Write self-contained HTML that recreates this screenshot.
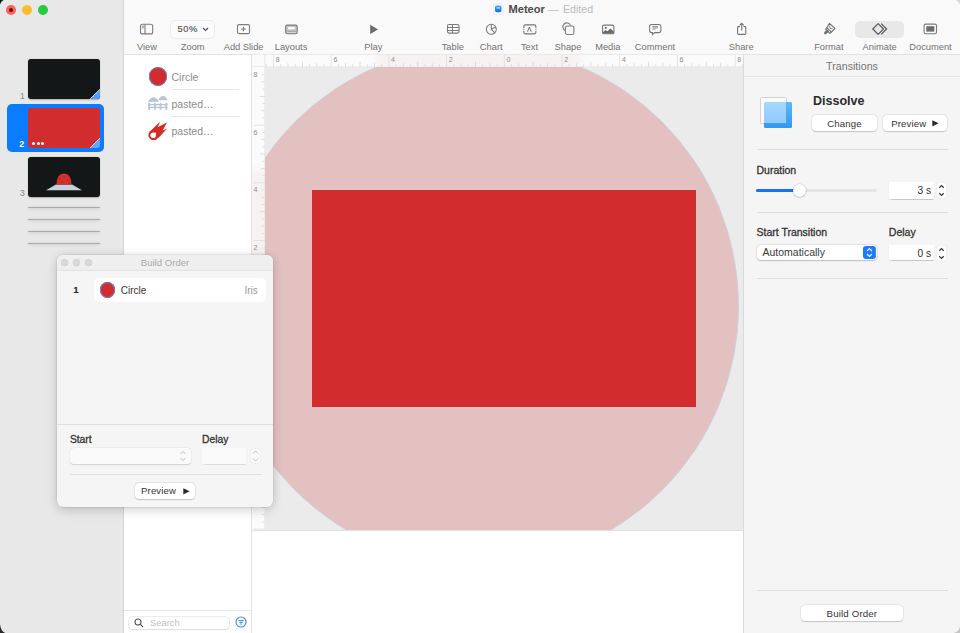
<!DOCTYPE html>
<html><head><meta charset="utf-8">
<style>
*{margin:0;padding:0;box-sizing:border-box}
html,body{width:960px;height:633px;overflow:hidden;background:#1a1a1a;font-family:"Liberation Sans",sans-serif}
.a{position:absolute}
#win{position:absolute;left:0;top:0;width:960px;height:633px;overflow:hidden;background:#f6f6f6}
#side{left:0;top:0;width:124px;height:633px;background:#e8e8e8;border-right:1px solid #d6d6d6}
#tb{left:124px;top:0;width:836px;height:55px;background:#f9f9f9;border-bottom:1px solid #e2e2e2}
.lbl{position:absolute;top:42px;font-size:9.3px;color:#727272;white-space:nowrap;transform:translateX(-50%)}
.ico{position:absolute}
#objs{left:124px;top:55px;width:128px;height:578px;background:#fff;border-right:1px solid #e3e3e3}
#rulerT{left:252px;top:55px;width:491px;height:12px;background:#f8f6f6;border-bottom:1px solid #e6e2e2}
#rulerL{left:252px;top:67px;width:13px;height:463px;background:#f8f6f6;border-right:1px solid #e6e2e2}
#below{left:252px;top:530px;width:491px;height:103px;background:#fff;border-top:1px solid #e2e2e2}
#insp{left:743px;top:55px;width:217px;height:578px;background:#f5f5f5;border-left:1px solid #dadada}
.txt{position:absolute;white-space:nowrap}
.btn{position:absolute;background:#fff;border-radius:4px;box-shadow:0 0 0 0.5px rgba(0,0,0,.09),0 0.5px 1.2px rgba(0,0,0,.17);font-size:9.6px;letter-spacing:0.15px;color:#333;text-align:center}
.semi{-webkit-text-stroke:0.3px currentColor}
.sep{position:absolute;height:1px;background:#dedede}
</style></head><body>
<div id="win">
  <div id="side" class="a">
    <div class="a" style="left:6px;top:4.6px;width:10px;height:10px;border-radius:50%;background:#ff5f57"></div>
    <div class="a" style="left:22px;top:4.6px;width:10px;height:10px;border-radius:50%;background:#febc2e"></div>
    <div class="a" style="left:38px;top:4.6px;width:10px;height:10px;border-radius:50%;background:#28c840"></div>
    <div class="a" style="left:9.2px;top:7.6px;width:4px;height:4px;border-radius:50%;background:#5a1410"></div>
    <!-- slide 1 -->
    <div class="a" style="left:28px;top:58.5px;width:72px;height:40.5px;border-radius:3px;background:#141718;box-shadow:0 0.5px 1.5px rgba(0,0,0,.25);overflow:hidden">
      <div class="a" style="right:0;bottom:0;width:10px;height:10px;background:linear-gradient(135deg,transparent 47%,rgba(255,255,255,.7) 47%,rgba(255,255,255,.7) 55%,#4c9dff 55%)"></div>
    </div>
    <div class="txt" style="left:20px;top:90.7px;font-size:8.6px;color:#858585">1</div>
    <!-- selection -->
    <div class="a" style="left:7px;top:103.5px;width:97px;height:48px;border-radius:5px;background:#0b7cff"></div>
    <div class="a" style="left:28px;top:107.5px;width:72px;height:40.5px;border-radius:3px;background:#d12d2e;overflow:hidden">
      <div class="a" style="right:0;bottom:0;width:10px;height:10px;background:linear-gradient(135deg,transparent 47%,rgba(255,255,255,.7) 47%,rgba(255,255,255,.7) 55%,#5ea9ff 55%)"></div>
      <div class="a" style="left:4px;top:34px;width:3px;height:3px;border-radius:50%;background:#fff"></div>
      <div class="a" style="left:8.5px;top:34px;width:3px;height:3px;border-radius:50%;background:#fff"></div>
      <div class="a" style="left:13px;top:34px;width:3px;height:3px;border-radius:50%;background:#fff"></div>
    </div>
    <div class="txt" style="left:19.3px;top:139.3px;font-size:8.8px;font-weight:bold;color:#fff">2</div>
    <!-- slide 3 -->
    <div class="a" style="left:28px;top:156.5px;width:72px;height:40.5px;border-radius:3px;background:#141718;box-shadow:0 0.5px 1.5px rgba(0,0,0,.25);overflow:hidden">
      <svg class="a" style="left:0;top:0" width="72" height="41" viewBox="0 0 72 41">
        <path d="M18 33.2 L28 27.5 L44 27.5 L54 33.2 Z" fill="#c6d3df"/>
        <path d="M28.5 27.8 Q28.5 16.5 36 16.5 Q43.5 16.5 43.5 27.8 Z" fill="#d72f2e"/>
        <circle cx="32" cy="22" r="0.6" fill="#333"/><circle cx="36" cy="20" r="0.6" fill="#333"/><circle cx="39.5" cy="23" r="0.6" fill="#333"/><circle cx="34" cy="25" r="0.6" fill="#333"/><circle cx="41" cy="26" r="0.6" fill="#333"/>
      </svg>
    </div>
    <div class="txt" style="left:20px;top:187.5px;font-size:8.6px;color:#858585">3</div>
    <div class="a" style="left:28px;top:206.5px;width:72px;height:1.2px;background:#aaaaaa;box-shadow:0 1.2px 2.5px rgba(0,0,0,.16),0 -1px 2px rgba(0,0,0,.06)"></div>
    <div class="a" style="left:28px;top:218.5px;width:72px;height:1.2px;background:#aaaaaa;box-shadow:0 1.2px 2.5px rgba(0,0,0,.16),0 -1px 2px rgba(0,0,0,.06)"></div>
    <div class="a" style="left:28px;top:230.5px;width:72px;height:1.2px;background:#aaaaaa;box-shadow:0 1.2px 2.5px rgba(0,0,0,.16),0 -1px 2px rgba(0,0,0,.06)"></div>
    <div class="a" style="left:28px;top:242.5px;width:72px;height:1.2px;background:#aaaaaa;box-shadow:0 1.2px 2.5px rgba(0,0,0,.16),0 -1px 2px rgba(0,0,0,.06)"></div>
  </div>

  <div id="tb" class="a">
  </div>
  <!-- toolbar content in page coords -->
  <div class="a" style="left:0;top:0;width:960px;height:55px">
    <!-- title -->
    <svg class="a" style="left:493px;top:3px" width="11" height="12" viewBox="0 0 11 12">
      <defs><linearGradient id="dg" x1="0" y1="0" x2="0" y2="1"><stop offset="0" stop-color="#45a8ff"/><stop offset="1" stop-color="#0b6ef6"/></linearGradient></defs>
      <path d="M0.7 0.8 H8 L10 2.8 V11.2 H0.7 Z" fill="#fdfdfd" stroke="#e4e4e4" stroke-width="0.7"/>
      <rect x="2" y="2.5" width="6.5" height="6.7" rx="1.8" fill="url(#dg)"/>
      <ellipse cx="5.25" cy="4.8" rx="2" ry="0.9" fill="#cfe6ff" opacity="0.8"/>
    </svg>
    <div class="txt" style="left:508.5px;top:3px;font-size:11.1px;font-weight:bold;color:#4b4b4b">Meteor</div>
    <div class="txt" style="left:548px;top:3px;font-size:10.6px;color:#b9b9b9">—</div>
    <div class="txt" style="left:563px;top:3px;font-size:10.6px;color:#b9b9b9">Edited</div>

    <!-- icons -->
    <svg class="a" style="left:139px;top:23px" width="16" height="13" viewBox="0 0 16 13" fill="none" stroke="#7b7b7b" stroke-width="1.1">
      <rect x="1.5" y="1.3" width="12.2" height="9.6" rx="2"/>
      <line x1="6" y1="1.3" x2="6" y2="10.9"/>
      <line x1="2.8" y1="3.2" x2="5" y2="3.2" stroke-width="0.8"/>
      <line x1="2.8" y1="4.8" x2="5" y2="4.8" stroke-width="0.8"/>
    </svg>
    <div class="a" style="left:171px;top:21px;width:43px;height:17px;border-radius:4px;background:#fbfbfb;box-shadow:0 0 0 0.7px #e6e6e6"></div>
    <div class="txt semi" style="left:177.6px;top:24.3px;font-size:9.3px;letter-spacing:0.5px;color:#5a5a5a;-webkit-text-stroke:0.2px #5a5a5a">50%</div>
    <svg class="a" style="left:202px;top:27px" width="7" height="5" viewBox="0 0 7 5" fill="none" stroke="#555" stroke-width="1.2"><path d="M1 1 L3.5 3.5 L6 1"/></svg>
    <svg class="a" style="left:236px;top:23px" width="15" height="13" viewBox="0 0 15 13" fill="none" stroke="#7b7b7b" stroke-width="1.1">
      <rect x="1.5" y="1.6" width="12" height="9" rx="1.5"/>
      <line x1="7.5" y1="3.8" x2="7.5" y2="8.4"/><line x1="5.2" y1="6.1" x2="9.8" y2="6.1"/>
    </svg>
    <svg class="a" style="left:284px;top:23px" width="15" height="13" viewBox="0 0 15 13">
      <rect x="1.6" y="2.1" width="11.6" height="8.7" rx="1.6" fill="#c4c4c4" stroke="#7a7a7a" stroke-width="1.1"/>
      <rect x="4" y="4" width="6.8" height="2.3" rx="0.6" fill="#fafafa"/>
      <rect x="3" y="7.6" width="8.8" height="0.9" fill="#6f6f6f"/>
      <rect x="3" y="6.8" width="8.8" height="0.5" fill="#eaeaea"/>
      <rect x="3" y="8.8" width="8.8" height="0.6" fill="#eaeaea"/>
    </svg>
    <svg class="a" style="left:369px;top:24px" width="10" height="11" viewBox="0 0 10 11"><path d="M1.2 0.8 L9 5.4 L1.2 10 Z" fill="#6b6b6b"/></svg>
    <svg class="a" style="left:445.5px;top:23.3px" width="14" height="11" viewBox="0 0 14 11" fill="none" stroke="#7b7b7b" stroke-width="1">
      <rect x="1.5" y="1.5" width="11.5" height="8.6" rx="1.5" stroke-width="1.1"/>
      <line x1="1.5" y1="4.5" x2="13" y2="4.5"/><line x1="1.5" y1="7.5" x2="13" y2="7.5"/><line x1="6.5" y1="1.5" x2="6.5" y2="10"/>
    </svg>
    <svg class="a" style="left:485px;top:23px" width="13" height="13" viewBox="0 0 13 13" fill="none" stroke="#7b7b7b" stroke-width="1.1">
      <circle cx="6.3" cy="6.3" r="5"/><path d="M6.3 1.3 V6.3 L9.8 9.8 M6.3 6.3 L10.8 4"/>
    </svg>
    <svg class="a" style="left:522px;top:23px" width="16" height="12" viewBox="0 0 16 12" fill="none" stroke="#767676" stroke-width="1.1">
      <path d="M1.8 4.9 V3.5 Q1.8 1.9 3.4 1.9 H12.3 Q13.9 1.9 13.9 3.5 V4.9 M1.8 7.7 V9.3 Q1.8 10.9 3.4 10.9 H12.3 Q13.9 10.9 13.9 9.3 V7.7 M1.8 5.8 V6.8 M13.9 5.8 V6.8"/>
      <path d="M5.5 8.8 L7.35 4 L9.2 8.8" stroke-width="1"/>
    </svg>
    <svg class="a" style="left:561px;top:21px" width="14" height="15" viewBox="0 0 14 15" fill="none" stroke="#7b7b7b" stroke-width="1.1">
      <path d="M4.3 9.6 A4 4 0 1 1 9.6 4.6"/>
      <rect x="4.4" y="5" width="8.5" height="8.5" rx="1.8"/>
    </svg>
    <svg class="a" style="left:601px;top:24px" width="14" height="11" viewBox="0 0 14 11">
      <rect x="1.6" y="1.1" width="11.3" height="8.7" rx="1.4" fill="none" stroke="#767676" stroke-width="1.1"/>
      <path d="M1.8 8.6 L4.4 6.1 L6.4 7.3 L9.5 4.6 L12.7 7.6 V9.6 H1.8 Z" fill="#6a6a6a"/>
      <circle cx="4.8" cy="3.9" r="1.05" fill="#6a6a6a"/>
    </svg>
    <svg class="a" style="left:648px;top:23px" width="14" height="13" viewBox="0 0 14 13" fill="none" stroke="#767676" stroke-width="1.05">
      <path d="M3.6 1.4 H10.9 Q12.9 1.4 12.9 3.4 V7.6 Q12.9 9.6 10.9 9.6 H6.7 L4.5 11.6 V9.6 H3.6 Q1.6 9.6 1.6 7.6 V3.4 Q1.6 1.4 3.6 1.4 Z"/>
      <path d="M4.4 3.4 H9.9 M4.4 4.8 H9.9 M4.4 6.2 H7.6" stroke-width="0.75"/>
    </svg>
    <svg class="a" style="left:735px;top:22px" width="13" height="14" viewBox="0 0 13 14" fill="none" stroke="#767676" stroke-width="1.1">
      <path d="M4.9 4.6 H3.2 Q2.6 4.6 2.6 5.4 V11.5 Q2.6 12.4 3.5 12.4 H9.9 Q10.8 12.4 10.8 11.5 V5.4 Q10.8 4.6 10.2 4.6 H8.5"/>
      <path d="M6.7 8.4 V1.4 M4.6 3.4 L6.7 1.2 L8.8 3.4"/>
    </svg>
    <svg class="a" style="left:822px;top:21px" width="15" height="16" viewBox="0 0 15 16" fill="none" stroke="#6f6f6f" stroke-width="1.1" stroke-linejoin="round">
      <path d="M7.5 2.3 L13 7.4 L9.4 11.1 L4.9 6.7 Z"/>
      <path d="M7.6 4.6 L8.1 7.3 L10.6 7.9" stroke-width="0.9"/>
      <path d="M4.9 6.7 L3.6 8.1 L7.9 12.4 L9.4 11.1"/>
      <path d="M5.3 10 L3.4 12" stroke-width="2.6" stroke-linecap="round"/>
    </svg>
    <div class="a" style="left:855px;top:21px;width:49px;height:17px;border-radius:5px;background:#e8e8e8"></div>
    <svg class="a" style="left:870px;top:21px" width="20" height="16" viewBox="0 0 20 16" fill="none" stroke="#575757" stroke-width="1.15" stroke-linejoin="round">
      <path d="M8.15 2.6 L13.5 8 L8.15 13.4 L2.8 8 Z"/>
      <path d="M11.2 2.6 L16.6 8 L11.2 13.4"/>
    </svg>
    <svg class="a" style="left:923px;top:23px" width="15" height="12" viewBox="0 0 15 12">
      <rect x="1.1" y="1.1" width="12.4" height="9.6" rx="1.5" fill="none" stroke="#7b7b7b" stroke-width="1.1"/>
      <rect x="3.3" y="3.2" width="8" height="5.4" fill="#6b6b6b"/>
    </svg>

    <div class="lbl" style="left:146.9px">View</div>
    <div class="lbl" style="left:192.7px">Zoom</div>
    <div class="lbl" style="left:243.6px">Add Slide</div>
    <div class="lbl" style="left:291px">Layouts</div>
    <div class="lbl" style="left:373.3px">Play</div>
    <div class="lbl" style="left:452.8px">Table</div>
    <div class="lbl" style="left:491.2px">Chart</div>
    <div class="lbl" style="left:529.5px">Text</div>
    <div class="lbl" style="left:568px">Shape</div>
    <div class="lbl" style="left:607.8px">Media</div>
    <div class="lbl" style="left:655px">Comment</div>
    <div class="lbl" style="left:741.2px">Share</div>
    <div class="lbl" style="left:828.9px">Format</div>
    <div class="lbl" style="left:879.6px">Animate</div>
    <div class="lbl" style="left:930.5px">Document</div>
  </div>
  <div id="objs" class="a">
    <div class="a" style="left:24.5px;top:12px;width:18.5px;height:18.5px;border-radius:50%;background:#d12d2e;box-shadow:0 0 0 1px #6d7fcc inset"></div>
    <div class="txt" style="left:47.5px;top:15.5px;font-size:10.5px;color:#8b8b8b">Circle</div>
    <div class="a" style="left:47.5px;top:34px;width:67px;height:1px;background:#e6e6e6"></div>
    <svg class="a" style="left:24px;top:41px" width="20" height="14" viewBox="0 0 20 14" fill="#b9c5d1">
      <path d="M0 5.8 Q2.5 1.3 5.6 1.3 Q8.6 1.3 11 5.8 Z"/><path d="M10 4.3 Q12.5 0 15 0 Q17.6 0 19.6 4.3 Z"/>
      <rect x="0" y="8" width="19.6" height="1.3"/><rect x="0" y="10.8" width="19.6" height="1.3"/>
      <rect x="0.3" y="6.8" width="1.8" height="7"/><rect x="6" y="6.8" width="1.8" height="7"/><rect x="11.6" y="6.8" width="1.8" height="7"/><rect x="17.4" y="6.8" width="1.8" height="7"/>
    </svg>
    <div class="txt" style="left:47.5px;top:42.5px;font-size:10.5px;color:#8b8b8b">pasted…</div>
    <div class="a" style="left:47.5px;top:61px;width:67px;height:1px;background:#e6e6e6"></div>
    <svg class="a" style="left:24px;top:66px" width="20" height="19" viewBox="0 0 20 19">
      <path d="M1.2 11.2 L12.2 0.6 L9.6 6.2 L19 1.4 L14.6 9.4 L19.2 7.4 L10.6 16.8 Z" fill="#d62b25"/>
      <circle cx="5.6" cy="14" r="5.2" fill="#d62b25"/>
      <circle cx="5.2" cy="14.3" r="2.8" fill="#fff"/><circle cx="7.2" cy="12.4" r="0.9" fill="#fff"/>
    </svg>
    <div class="txt" style="left:47.5px;top:70px;font-size:10.5px;color:#8b8b8b">pasted…</div>
    <div class="a" style="left:0;top:555px;width:127px;height:1px;background:#e6e6e6"></div>
    <div class="a" style="left:5px;top:561.5px;width:100px;height:12.5px;border-radius:3px;background:#fff;box-shadow:0 0 0 0.6px #dedede,0 0.6px 1px rgba(0,0,0,.12)"></div>
    <svg class="a" style="left:10px;top:563px" width="10" height="10" viewBox="0 0 10 10" fill="none" stroke="#555" stroke-width="1.1"><circle cx="4" cy="4" r="3"/><path d="M6.2 6.2 L9 9"/></svg>
    <div class="txt" style="left:26px;top:562.3px;font-size:9.4px;color:#c0c0c0">Search</div>
    <svg class="a" style="left:110.8px;top:560.8px" width="12" height="12" viewBox="0 0 12 12" fill="none" stroke="#3d8cf0" stroke-width="1.15"><circle cx="6" cy="6" r="5"/><path d="M3.5 4.5 H8.5 M4.3 6.3 H7.7 M5.2 8 H6.8"/></svg>
  </div>
  <div class="a" style="left:252px;top:54px;width:491px;height:476px;overflow:hidden;background:#fbfbfb">
    <div class="a" style="left:13px;top:13px;width:478px;height:463px;background:#ebebeb"></div>
    <svg class="a" style="left:13px;top:13px" width="478" height="463" viewBox="13 13 478 463"><circle cx="226.55" cy="252.07" r="260.08" fill="#e4c1c1" stroke="#ccd2e2" stroke-width="0.8"/></svg>
    <div class="a" style="left:0;top:0;width:491px;height:13px;overflow:hidden"><div class="a" style="left:124px;top:-4px;width:205px;height:22px;background:#e4c1c1;filter:blur(3px)"></div></div>
    <div class="a" style="left:0;top:13px;width:13px;height:463px;overflow:hidden"><div class="a" style="left:-4px;top:103px;width:22px;height:298px;background:#e4c1c1;filter:blur(3px)"></div></div>
    <div class="a" style="left:60px;top:136px;width:384px;height:217px;background:#d12d2e"></div>
  </div>
  <svg class="a" style="left:252px;top:54px" width="491" height="13" viewBox="0 0 491 13">
<rect x="0" y="0" width="491" height="13" fill="rgba(250,250,250,0.86)"/>
<rect x="0" y="0" width="491" height="1" fill="#e9e9e9"/>
<rect x="0" y="12.5" width="491" height="0.5" fill="#e2e2e2"/>
<rect x="12.5" y="0" width="0.8" height="13" fill="#e4e4e4"/>
<rect x="13.89" y="10.2" width="0.8" height="2.6" fill="#dadada"/>
<rect x="21.10" y="1" width="0.8" height="12" fill="#dedede"/>
<rect x="28.31" y="10.2" width="0.8" height="2.6" fill="#dadada"/>
<rect x="35.53" y="9.2" width="0.8" height="3.6" fill="#d8d8d8"/>
<rect x="42.74" y="10.2" width="0.8" height="2.6" fill="#dadada"/>
<rect x="49.95" y="7.8" width="0.8" height="5" fill="#d5d5d5"/>
<rect x="57.16" y="10.2" width="0.8" height="2.6" fill="#dadada"/>
<rect x="64.37" y="9.2" width="0.8" height="3.6" fill="#d8d8d8"/>
<rect x="71.59" y="10.2" width="0.8" height="2.6" fill="#dadada"/>
<rect x="78.80" y="1" width="0.8" height="12" fill="#dedede"/>
<rect x="86.01" y="10.2" width="0.8" height="2.6" fill="#dadada"/>
<rect x="93.22" y="9.2" width="0.8" height="3.6" fill="#d8d8d8"/>
<rect x="100.44" y="10.2" width="0.8" height="2.6" fill="#dadada"/>
<rect x="107.65" y="7.8" width="0.8" height="5" fill="#d5d5d5"/>
<rect x="114.86" y="10.2" width="0.8" height="2.6" fill="#dadada"/>
<rect x="122.08" y="9.2" width="0.8" height="3.6" fill="#d8d8d8"/>
<rect x="129.29" y="10.2" width="0.8" height="2.6" fill="#dadada"/>
<rect x="136.50" y="1" width="0.8" height="12" fill="#dedede"/>
<rect x="143.71" y="10.2" width="0.8" height="2.6" fill="#dadada"/>
<rect x="150.93" y="9.2" width="0.8" height="3.6" fill="#d8d8d8"/>
<rect x="158.14" y="10.2" width="0.8" height="2.6" fill="#dadada"/>
<rect x="165.35" y="7.8" width="0.8" height="5" fill="#d5d5d5"/>
<rect x="172.56" y="10.2" width="0.8" height="2.6" fill="#dadada"/>
<rect x="179.78" y="9.2" width="0.8" height="3.6" fill="#d8d8d8"/>
<rect x="186.99" y="10.2" width="0.8" height="2.6" fill="#dadada"/>
<rect x="194.20" y="1" width="0.8" height="12" fill="#dedede"/>
<rect x="201.41" y="10.2" width="0.8" height="2.6" fill="#dadada"/>
<rect x="208.62" y="9.2" width="0.8" height="3.6" fill="#d8d8d8"/>
<rect x="215.84" y="10.2" width="0.8" height="2.6" fill="#dadada"/>
<rect x="223.05" y="7.8" width="0.8" height="5" fill="#d5d5d5"/>
<rect x="230.26" y="10.2" width="0.8" height="2.6" fill="#dadada"/>
<rect x="237.47" y="9.2" width="0.8" height="3.6" fill="#d8d8d8"/>
<rect x="244.69" y="10.2" width="0.8" height="2.6" fill="#dadada"/>
<rect x="251.90" y="1" width="0.8" height="12" fill="#dedede"/>
<rect x="259.11" y="10.2" width="0.8" height="2.6" fill="#dadada"/>
<rect x="266.33" y="9.2" width="0.8" height="3.6" fill="#d8d8d8"/>
<rect x="273.54" y="10.2" width="0.8" height="2.6" fill="#dadada"/>
<rect x="280.75" y="7.8" width="0.8" height="5" fill="#d5d5d5"/>
<rect x="287.96" y="10.2" width="0.8" height="2.6" fill="#dadada"/>
<rect x="295.18" y="9.2" width="0.8" height="3.6" fill="#d8d8d8"/>
<rect x="302.39" y="10.2" width="0.8" height="2.6" fill="#dadada"/>
<rect x="309.60" y="1" width="0.8" height="12" fill="#dedede"/>
<rect x="316.81" y="10.2" width="0.8" height="2.6" fill="#dadada"/>
<rect x="324.02" y="9.2" width="0.8" height="3.6" fill="#d8d8d8"/>
<rect x="331.24" y="10.2" width="0.8" height="2.6" fill="#dadada"/>
<rect x="338.45" y="7.8" width="0.8" height="5" fill="#d5d5d5"/>
<rect x="345.66" y="10.2" width="0.8" height="2.6" fill="#dadada"/>
<rect x="352.88" y="9.2" width="0.8" height="3.6" fill="#d8d8d8"/>
<rect x="360.09" y="10.2" width="0.8" height="2.6" fill="#dadada"/>
<rect x="367.30" y="1" width="0.8" height="12" fill="#dedede"/>
<rect x="374.51" y="10.2" width="0.8" height="2.6" fill="#dadada"/>
<rect x="381.73" y="9.2" width="0.8" height="3.6" fill="#d8d8d8"/>
<rect x="388.94" y="10.2" width="0.8" height="2.6" fill="#dadada"/>
<rect x="396.15" y="7.8" width="0.8" height="5" fill="#d5d5d5"/>
<rect x="403.36" y="10.2" width="0.8" height="2.6" fill="#dadada"/>
<rect x="410.58" y="9.2" width="0.8" height="3.6" fill="#d8d8d8"/>
<rect x="417.79" y="10.2" width="0.8" height="2.6" fill="#dadada"/>
<rect x="425.00" y="1" width="0.8" height="12" fill="#dedede"/>
<rect x="432.21" y="10.2" width="0.8" height="2.6" fill="#dadada"/>
<rect x="439.43" y="9.2" width="0.8" height="3.6" fill="#d8d8d8"/>
<rect x="446.64" y="10.2" width="0.8" height="2.6" fill="#dadada"/>
<rect x="453.85" y="7.8" width="0.8" height="5" fill="#d5d5d5"/>
<rect x="461.06" y="10.2" width="0.8" height="2.6" fill="#dadada"/>
<rect x="468.27" y="9.2" width="0.8" height="3.6" fill="#d8d8d8"/>
<rect x="475.49" y="10.2" width="0.8" height="2.6" fill="#dadada"/>
<rect x="482.70" y="1" width="0.8" height="12" fill="#dedede"/>
<rect x="489.91" y="10.2" width="0.8" height="2.6" fill="#dadada"/>
</svg>
<div class="txt" style="left:275.7px;top:55.6px;font-size:7px;color:#8c8c8c">8</div>
<div class="txt" style="left:333.4px;top:55.6px;font-size:7px;color:#8c8c8c">6</div>
<div class="txt" style="left:391.1px;top:55.6px;font-size:7px;color:#8c8c8c">4</div>
<div class="txt" style="left:448.8px;top:55.6px;font-size:7px;color:#8c8c8c">2</div>
<div class="txt" style="left:506.5px;top:55.6px;font-size:7px;color:#8c8c8c">0</div>
<div class="txt" style="left:564.2px;top:55.6px;font-size:7px;color:#8c8c8c">2</div>
<div class="txt" style="left:621.9px;top:55.6px;font-size:7px;color:#8c8c8c">4</div>
<div class="txt" style="left:679.6px;top:55.6px;font-size:7px;color:#8c8c8c">6</div>
<div class="txt" style="left:737.3px;top:55.6px;font-size:7px;color:#8c8c8c">8</div>
  <svg class="a" style="left:252px;top:67px" width="13" height="463" viewBox="0 0 13 463">
<rect x="0" y="0" width="13" height="463" fill="rgba(250,250,250,0.86)"/>

<rect x="12.5" y="0" width="0.5" height="463" fill="#e2e2e2"/>
<rect x="10.2" y="7.31" width="2.6" height="0.8" fill="#dadada"/>
<rect x="9.2" y="14.52" width="3.6" height="0.8" fill="#d8d8d8"/>
<rect x="10.2" y="21.74" width="2.6" height="0.8" fill="#dadada"/>
<rect x="7.8" y="28.95" width="5" height="0.8" fill="#d5d5d5"/>
<rect x="10.2" y="36.16" width="2.6" height="0.8" fill="#dadada"/>
<rect x="9.2" y="43.38" width="3.6" height="0.8" fill="#d8d8d8"/>
<rect x="10.2" y="50.59" width="2.6" height="0.8" fill="#dadada"/>
<rect x="1" y="57.80" width="12" height="0.8" fill="#dedede"/>
<rect x="10.2" y="65.01" width="2.6" height="0.8" fill="#dadada"/>
<rect x="9.2" y="72.22" width="3.6" height="0.8" fill="#d8d8d8"/>
<rect x="10.2" y="79.44" width="2.6" height="0.8" fill="#dadada"/>
<rect x="7.8" y="86.65" width="5" height="0.8" fill="#d5d5d5"/>
<rect x="10.2" y="93.86" width="2.6" height="0.8" fill="#dadada"/>
<rect x="9.2" y="101.08" width="3.6" height="0.8" fill="#d8d8d8"/>
<rect x="10.2" y="108.29" width="2.6" height="0.8" fill="#dadada"/>
<rect x="1" y="115.50" width="12" height="0.8" fill="#dedede"/>
<rect x="10.2" y="122.71" width="2.6" height="0.8" fill="#dadada"/>
<rect x="9.2" y="129.93" width="3.6" height="0.8" fill="#d8d8d8"/>
<rect x="10.2" y="137.14" width="2.6" height="0.8" fill="#dadada"/>
<rect x="7.8" y="144.35" width="5" height="0.8" fill="#d5d5d5"/>
<rect x="10.2" y="151.56" width="2.6" height="0.8" fill="#dadada"/>
<rect x="9.2" y="158.78" width="3.6" height="0.8" fill="#d8d8d8"/>
<rect x="10.2" y="165.99" width="2.6" height="0.8" fill="#dadada"/>
<rect x="1" y="173.20" width="12" height="0.8" fill="#dedede"/>
<rect x="10.2" y="180.41" width="2.6" height="0.8" fill="#dadada"/>
<rect x="9.2" y="187.62" width="3.6" height="0.8" fill="#d8d8d8"/>
<rect x="10.2" y="194.84" width="2.6" height="0.8" fill="#dadada"/>
<rect x="7.8" y="202.05" width="5" height="0.8" fill="#d5d5d5"/>
<rect x="10.2" y="209.26" width="2.6" height="0.8" fill="#dadada"/>
<rect x="9.2" y="216.47" width="3.6" height="0.8" fill="#d8d8d8"/>
<rect x="10.2" y="223.69" width="2.6" height="0.8" fill="#dadada"/>
<rect x="1" y="230.90" width="12" height="0.8" fill="#dedede"/>
<rect x="10.2" y="238.11" width="2.6" height="0.8" fill="#dadada"/>
<rect x="9.2" y="245.33" width="3.6" height="0.8" fill="#d8d8d8"/>
<rect x="10.2" y="252.54" width="2.6" height="0.8" fill="#dadada"/>
<rect x="7.8" y="259.75" width="5" height="0.8" fill="#d5d5d5"/>
<rect x="10.2" y="266.96" width="2.6" height="0.8" fill="#dadada"/>
<rect x="9.2" y="274.18" width="3.6" height="0.8" fill="#d8d8d8"/>
<rect x="10.2" y="281.39" width="2.6" height="0.8" fill="#dadada"/>
<rect x="1" y="288.60" width="12" height="0.8" fill="#dedede"/>
<rect x="10.2" y="295.81" width="2.6" height="0.8" fill="#dadada"/>
<rect x="9.2" y="303.03" width="3.6" height="0.8" fill="#d8d8d8"/>
<rect x="10.2" y="310.24" width="2.6" height="0.8" fill="#dadada"/>
<rect x="7.8" y="317.45" width="5" height="0.8" fill="#d5d5d5"/>
<rect x="10.2" y="324.66" width="2.6" height="0.8" fill="#dadada"/>
<rect x="9.2" y="331.88" width="3.6" height="0.8" fill="#d8d8d8"/>
<rect x="10.2" y="339.09" width="2.6" height="0.8" fill="#dadada"/>
<rect x="1" y="346.30" width="12" height="0.8" fill="#dedede"/>
<rect x="10.2" y="353.51" width="2.6" height="0.8" fill="#dadada"/>
<rect x="9.2" y="360.73" width="3.6" height="0.8" fill="#d8d8d8"/>
<rect x="10.2" y="367.94" width="2.6" height="0.8" fill="#dadada"/>
<rect x="7.8" y="375.15" width="5" height="0.8" fill="#d5d5d5"/>
<rect x="10.2" y="382.36" width="2.6" height="0.8" fill="#dadada"/>
<rect x="9.2" y="389.58" width="3.6" height="0.8" fill="#d8d8d8"/>
<rect x="10.2" y="396.79" width="2.6" height="0.8" fill="#dadada"/>
<rect x="1" y="404.00" width="12" height="0.8" fill="#dedede"/>
<rect x="10.2" y="411.21" width="2.6" height="0.8" fill="#dadada"/>
<rect x="9.2" y="418.43" width="3.6" height="0.8" fill="#d8d8d8"/>
<rect x="10.2" y="425.64" width="2.6" height="0.8" fill="#dadada"/>
<rect x="7.8" y="432.85" width="5" height="0.8" fill="#d5d5d5"/>
<rect x="10.2" y="440.06" width="2.6" height="0.8" fill="#dadada"/>
<rect x="9.2" y="447.27" width="3.6" height="0.8" fill="#d8d8d8"/>
<rect x="10.2" y="454.49" width="2.6" height="0.8" fill="#dadada"/>
<rect x="1" y="461.70" width="12" height="0.8" fill="#dedede"/>
</svg>
<div class="txt" style="left:253.6px;top:71.0px;font-size:7px;color:#8c8c8c">8</div>
<div class="txt" style="left:253.6px;top:128.7px;font-size:7px;color:#8c8c8c">6</div>
<div class="txt" style="left:253.6px;top:186.4px;font-size:7px;color:#8c8c8c">4</div>
<div class="txt" style="left:253.6px;top:244.1px;font-size:7px;color:#8c8c8c">2</div>
<div class="txt" style="left:253.6px;top:301.8px;font-size:7px;color:#8c8c8c">0</div>
<div class="txt" style="left:253.6px;top:359.5px;font-size:7px;color:#8c8c8c">2</div>
<div class="txt" style="left:253.6px;top:417.2px;font-size:7px;color:#8c8c8c">4</div>
<div class="txt" style="left:253.6px;top:474.9px;font-size:7px;color:#8c8c8c">6</div>
  <div id="below" class="a"></div>
  <div id="insp" class="a"></div>
  <div class="a" style="left:744px;top:55px;width:216px;height:578px">
    <div class="txt" style="left:0;width:216px;text-align:center;top:5.3px;font-size:10.7px;color:#747474">Transitions</div>
    <div class="a" style="left:0;top:21px;width:216px;height:1px;background:#e2e2e2"></div>
    <!-- dissolve icon -->
    <div class="a" style="left:15.8px;top:41.8px;width:27px;height:27px;border:1px solid #d3d3d3;background:#fafafa;border-radius:1.5px"></div>
    <div class="a" style="left:20.4px;top:46.9px;width:27.6px;height:26.6px;border-radius:1.5px;background:linear-gradient(180deg,#5cb7ff,#2d99f7);box-shadow:0 0 0.5px rgba(0,0,0,.25)"></div>
    <div class="a" style="left:20.4px;top:46.9px;width:21.9px;height:20.9px;background:rgba(255,255,255,.45);border-right:0.6px dashed rgba(200,200,200,.5);border-bottom:0.6px dashed rgba(200,200,200,.5)"></div>
    <div class="txt" style="left:69px;top:38.8px;font-size:12.5px;font-weight:bold;color:#2b2b2b">Dissolve</div>
    <div class="btn" style="left:68.3px;top:60.2px;width:64.3px;height:15.6px;line-height:17px">Change</div>
    <div class="btn" style="left:138.9px;top:60.2px;width:64.6px;height:15.6px;line-height:17px;text-align:left;padding-left:8.3px">Preview<svg style="position:absolute;left:49.5px;top:4.6px" width="7" height="7" viewBox="0 0 7 7"><path d="M0.3 0.2 L6.6 3.3 L0.3 6.4 Z" fill="#2a2a2a"/></svg></div>
    <div class="sep" style="left:12.5px;top:94px;width:191px"></div>
    <div class="txt semi" style="left:12.5px;top:108.7px;font-size:10.5px;color:#333">Duration</div>
    <div class="a" style="left:12.2px;top:133.8px;width:121px;height:3.2px;border-radius:1.6px;background:#e5e5e5"></div>
    <div class="a" style="left:12.2px;top:133.8px;width:43px;height:3.2px;border-radius:1.6px;background:#1275f4"></div>
    <div class="a" style="left:48.7px;top:128.9px;width:13.2px;height:13.2px;border-radius:50%;background:#fff;box-shadow:0 0 0 0.5px rgba(0,0,0,.1),0 0.5px 1.5px rgba(0,0,0,.25)"></div>
    <div class="a" style="left:144.8px;top:127px;width:44.8px;height:16.6px;background:#fff;box-shadow:0 0.5px 1px rgba(0,0,0,.18)"></div>
    <div class="txt" style="left:144.8px;width:42.3px;text-align:right;top:130.2px;font-size:10.2px;color:#2e2e2e">3 s</div>
    <svg class="a" style="left:192.4px;top:127px" width="11" height="17" viewBox="0 0 11 17">
      <rect x="0.3" y="0.3" width="10.4" height="16.4" rx="3.5" fill="#fff" stroke="#e4e4e4" stroke-width="0.6"/>
      <path d="M3.2 5.8 L5.5 3.6 L7.8 5.8 M3.2 11.2 L5.5 13.4 L7.8 11.2" fill="none" stroke="#3a3a3a" stroke-width="1.2"/>
    </svg>
    <div class="sep" style="left:12.5px;top:156.5px;width:191px"></div>
    <div class="txt semi" style="left:12.5px;top:171.2px;font-size:10.5px;color:#333">Start Transition</div>
    <div class="txt semi" style="left:144.8px;top:171.2px;font-size:10.5px;color:#333">Delay</div>
    <div class="a" style="left:12.5px;top:189.8px;width:120.8px;height:15.7px;border-radius:4px;background:#fff;box-shadow:0 0 0 0.5px rgba(0,0,0,.08),0 0.5px 1.5px rgba(0,0,0,.2)"></div>
    <div class="txt" style="left:18.5px;top:191.2px;font-size:10.5px;color:#3a3a3a">Automatically</div>
    <svg class="a" style="left:118.7px;top:191.2px" width="13" height="13" viewBox="0 0 13 13">
      <rect x="0" y="0" width="12.9" height="12.9" rx="3" fill="#1a7df5"/>
      <path d="M4 5 L6.45 2.6 L8.9 5 M4 8 L6.45 10.4 L8.9 8" fill="none" stroke="#fff" stroke-width="1.1"/>
    </svg>
    <div class="a" style="left:144.8px;top:189.8px;width:44.8px;height:15.7px;background:#fff;box-shadow:0 0.5px 1px rgba(0,0,0,.18)"></div>
    <div class="txt" style="left:144.8px;width:42.3px;text-align:right;top:192.7px;font-size:10.2px;color:#2e2e2e">0 s</div>
    <svg class="a" style="left:192.4px;top:189.5px" width="11" height="17" viewBox="0 0 11 17">
      <rect x="0.3" y="0.3" width="10.4" height="16.4" rx="3.5" fill="#fff" stroke="#e4e4e4" stroke-width="0.6"/>
      <path d="M3.2 5.8 L5.5 3.6 L7.8 5.8 M3.2 11.2 L5.5 13.4 L7.8 11.2" fill="none" stroke="#3a3a3a" stroke-width="1.2"/>
    </svg>
    <div class="sep" style="left:12.5px;top:222.5px;width:191px"></div>
    <div class="sep" style="left:12.5px;top:535px;width:191px"></div>
    <div class="btn" style="left:56.8px;top:550px;width:102.2px;height:15.6px;line-height:17px;font-size:9.7px">Build Order</div>
  </div>

  <!-- Build Order panel -->
  <div class="a" style="left:57px;top:254.9px;width:216px;height:252.2px;border-radius:6px;background:#f5f5f5;box-shadow:0 0 0 0.5px rgba(0,0,0,.1),0 0 8px rgba(0,0,0,.08),0 4px 12px rgba(0,0,0,.13);overflow:hidden">
    <div class="a" style="left:0;top:0;width:216px;height:16px;background:#efefef;border-bottom:1px solid #e3e3e3"></div>
    <svg class="a" style="left:0;top:0" width="40" height="16" viewBox="0 0 40 16"><g fill="#d9d9d9" stroke="#cdcdcd" stroke-width="0.6"><circle cx="7.5" cy="7.7" r="3.4"/><circle cx="19.4" cy="7.7" r="3.4"/><circle cx="31.5" cy="7.7" r="3.4"/></g></svg>
    <div class="txt" style="left:0;width:216px;text-align:center;top:2.2px;font-size:9.6px;color:#aaaaaa">Build Order</div>
    <div class="txt" style="left:16.2px;top:29.3px;font-size:9.8px;font-weight:bold;color:#222">1</div>
    <div class="a" style="left:37px;top:23px;width:171.8px;height:24px;border-radius:5px;background:#fff"></div>
    <div class="a" style="left:42.7px;top:27.5px;width:15.3px;height:15.3px;border-radius:50%;background:#d12d2e;box-shadow:0 0 0 1px #6d7fcc inset"></div>
    <div class="txt" style="left:63.8px;top:30.3px;font-size:10px;color:#333">Circle</div>
    <div class="txt" style="left:187.5px;top:30.3px;font-size:10px;color:#9a9a9a">Iris</div>
    <div class="a" style="left:0;top:169.3px;width:216px;height:1px;background:#e0e0e0"></div>
    <div class="txt semi" style="left:12.9px;top:179px;font-size:10.3px;color:#333">Start</div>
    <div class="txt semi" style="left:145.1px;top:179px;font-size:10.3px;color:#333">Delay</div>
    <div class="a" style="left:12.9px;top:193.4px;width:120.8px;height:16px;border-radius:4px;background:#fafafa;box-shadow:0 0 0 0.5px rgba(0,0,0,.05),0 0.5px 1px rgba(0,0,0,.12)"></div>
    <svg class="a" style="left:122px;top:194.5px" width="8" height="14" viewBox="0 0 8 14" fill="none" stroke="#b5b5b5" stroke-width="0.9"><path d="M1.5 5 L4 2.5 L6.5 5 M1.5 9 L4 11.5 L6.5 9"/></svg>
    <div class="a" style="left:145.1px;top:193.4px;width:44.2px;height:16px;background:#fafafa;box-shadow:0 0.5px 1px rgba(0,0,0,.1)"></div>
    <svg class="a" style="left:193.2px;top:193.4px" width="11" height="16" viewBox="0 0 11 16">
      <rect x="0.3" y="0.3" width="10.4" height="15.4" rx="3.5" fill="#fafafa" stroke="#e8e8e8" stroke-width="0.6"/>
      <path d="M3 5.5 L5.5 3 L8 5.5 M3 10.5 L5.5 13 L8 10.5" fill="none" stroke="#b5b5b5" stroke-width="0.9"/>
    </svg>
    <div class="a" style="left:12.9px;top:219.2px;width:190.7px;height:1px;background:#e0e0e0"></div>
    <div class="btn" style="left:77.7px;top:228.4px;width:60.5px;height:16px;line-height:16px;text-align:left;padding-left:6.3px">Preview<svg style="position:absolute;left:47.9px;top:4.8px" width="7" height="7" viewBox="0 0 7 7"><path d="M0.3 0.2 L6.6 3.3 L0.3 6.4 Z" fill="#2a2a2a"/></svg></div>
  </div>

  <svg class="a" style="left:0;top:0;pointer-events:none" width="960" height="633" viewBox="0 0 960 633">
    <path d="M0 0 H3.6 Q0.9 1.1 0 4.4 Z" fill="#161616"/>
    <path d="M0 624 Q0.6 631.2 5.2 633 H0 Z" fill="#2a2a2a"/>
    <path d="M955.5 0 Q959.2 1.4 960 5 V0 Z" fill="#d8d8d8"/>
    <path d="M960 626 Q959.2 631.6 953.8 633 H960 Z" fill="#c6c6c6"/>
  </svg>
</div>
</body></html>
